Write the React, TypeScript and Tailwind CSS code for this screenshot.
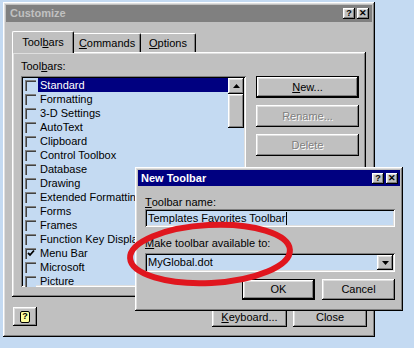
import React from "react";

const raised =
  "shadow-[inset_-1px_-1px_#000,inset_1px_1px_#fff,inset_-2px_-2px_#808080,inset_2px_2px_#dfdfdf]";
const sunken =
  "shadow-[inset_1px_1px_#808080,inset_-1px_-1px_#fff,inset_2px_2px_#000,inset_-2px_-2px_#dfdfdf]";

function Btn({
  children,
  w,
  def,
  disabled,
}: {
  children: React.ReactNode;
  w: string;
  def?: boolean;
  disabled?: boolean;
}) {
  const inner = (
    <div
      className={`${raised} bg-[#c0c0c0] h-full w-full flex items-center justify-center text-[11px] ${
        disabled ? "text-[#808080] [text-shadow:1px_1px_0_#fff]" : "text-black"
      }`}
    >
      {children}
    </div>
  );
  if (def) {
    return <div className={`${w} border border-black`}>{inner}</div>;
  }
  return <div className={w}>{inner}</div>;
}

function TitleBtn({ children }: { children: React.ReactNode }) {
  return (
    <div
      className={`${raised} bg-[#c0c0c0] w-[12px] h-[11px] flex items-center justify-center text-[9px] font-bold leading-none text-black`}
    >
      {children}
    </div>
  );
}

function Check({ checked }: { checked?: boolean }) {
  return (
    <div className="w-[11px] h-[11px] shrink-0 shadow-[inset_1px_1px_#808080,inset_2px_2px_#404040] bg-[#c4daf2] flex items-center justify-center">
      {checked && (
        <svg width="9" height="9" viewBox="0 0 9 9" className="ml-[1px] mt-[1px]">
          <path d="M1 4 L3 6 L7 1.5" stroke="#000" strokeWidth="1.8" fill="none" />
        </svg>
      )}
    </div>
  );
}

const items = [
  "Standard",
  "Formatting",
  "3-D Settings",
  "AutoText",
  "Clipboard",
  "Control Toolbox",
  "Database",
  "Drawing",
  "Extended Formatting",
  "Forms",
  "Frames",
  "Function Key Display",
  "Menu Bar",
  "Microsoft",
  "Picture",
];

export default function App() {
  return (
    <div className="w-[414px] h-[348px] bg-[#c4daf2] relative overflow-hidden pt-[2px] pl-[3px] [font-family:'Liberation_Sans',Arial,sans-serif]">
      {/* Customize window */}
      <div className={`w-[372px] h-[335px] bg-[#c0c0c0] ${raised} p-[3px] flex flex-col`}>
        <div className="h-[17px] bg-[#808080] flex items-center justify-between pl-[4px] pr-[3px]">
          <span className="text-[11px] font-bold text-[#c0c0c0]">Customize</span>
          <div className="flex gap-[2px]">
            <TitleBtn>?</TitleBtn>
            <TitleBtn>✕</TitleBtn>
          </div>
        </div>

        {/* Tabs */}
        <div className="ml-[6px] mt-[9px] flex items-end h-[21px] relative z-10">
          <div className="w-[62px] h-[22px] -mb-[1px] bg-[#c0c0c0] border-t border-l border-white rounded-tl-[2px] rounded-tr-[2px] shadow-[inset_-1px_0_#808080] border-r border-r-black flex items-center justify-center text-[11px]">
            Tool<span className="underline">b</span>ars
          </div>
          <div className="w-[67px] h-[19px] border-t border-white rounded-tr-[2px] shadow-[inset_-1px_0_#808080] border-r border-r-black flex items-center justify-center text-[11px]">
            <span className="underline">C</span>ommands
          </div>
          <div className="w-[55px] h-[19px] border-t border-white rounded-tr-[2px] shadow-[inset_-1px_0_#808080] border-r border-r-black flex items-center justify-center text-[11px]">
            <span className="underline">O</span>ptions
          </div>
        </div>

        {/* Panel */}
        <div className={`ml-[6px] w-[354px] h-[245px] ${raised} flex pl-[9px] pt-[8px]`}>
          <div className="flex flex-col">
            <div className="h-[16px] text-[11px] leading-[12px]">
              Tool<span className="underline">b</span>ars:
            </div>
            <div className={`w-[225px] h-[211px] ${sunken} bg-[#c4daf2] p-[2px] flex`}>
              <div className="flex-1 flex flex-col">
                {items.map((t, i) => (
                  <div key={t} className="h-[14px] flex items-center">
                    <div className="w-[2px]" />
                    <Check checked={t === "Menu Bar"} />
                    <div
                      className={`ml-[2px] flex-1 h-[14px] pl-[2px] flex items-center text-[11px] whitespace-nowrap overflow-hidden ${
                        i === 0 ? "bg-[#000080] text-white" : "text-black"
                      }`}
                    >
                      {t}
                    </div>
                  </div>
                ))}
              </div>
              <div className="w-[16px] flex flex-col">
                <div className={`h-[16px] ${raised} bg-[#c0c0c0] flex items-center justify-center`}>
                  <svg width="7" height="4" viewBox="0 0 7 4">
                    <path d="M3.5 0 L7 4 L0 4 Z" fill="#000" />
                  </svg>
                </div>
                <div className={`h-[34px] ${raised} bg-[#c0c0c0]`} />
                <div className="flex-1 bg-[#c4daf2]" />
              </div>
            </div>
          </div>
          <div className="ml-[10px] mt-[16px] flex flex-col gap-[7px]">
            <Btn w="w-[103px] h-[22px]" def>
              <span className="underline">N</span>ew...
            </Btn>
            <Btn w="w-[103px] h-[22px]" disabled>
              Rename...
            </Btn>
            <Btn w="w-[103px] h-[22px]" disabled>
              Delete
            </Btn>
          </div>
        </div>

        {/* Bottom row */}
        <div className="ml-[7px] mt-[10px] flex items-start">
          <div className={`w-[24px] h-[19px] ${raised} bg-[#c0c0c0] flex items-center justify-center`}>
            <div className="w-[10px] h-[12px] bg-[#ffffa0] border border-black rounded-[2px] flex items-center justify-center text-[9px] font-bold leading-none text-black">
              ?
            </div>
          </div>
          <div className="ml-[175px] mt-[1px] flex gap-[6px]">
            <Btn w="w-[75px] h-[19px]">
              <span className="underline">K</span>eyboard...
            </Btn>
            <Btn w="w-[74px] h-[19px]">Close</Btn>
          </div>
        </div>
      </div>

      {/* New Toolbar dialog */}
      <div className={`absolute left-[135px] top-[167px] w-[268px] h-[144px] bg-[#c0c0c0] ${raised} p-[3px] flex flex-col z-20`}>
        <div className="h-[16px] bg-[#000080] flex items-center justify-between pl-[3px] pr-[2px]">
          <span className="text-[11px] font-bold text-white">New Toolbar</span>
          <div className="flex gap-[2px]">
            <TitleBtn>?</TitleBtn>
            <TitleBtn>✕</TitleBtn>
          </div>
        </div>
        <div className="pl-[7px] flex flex-col">
          <div className="mt-[9px] h-[14px] flex items-center text-[11px]">
            <span className="underline">T</span>oolbar name:
          </div>
          <div className={`w-[250px] h-[18px] ${sunken} bg-[#c4daf2] flex items-center pl-[3px] text-[11px]`}>
            Templates Favorites Toolbar
            <span className="inline-block w-[1px] h-[13px] bg-black ml-[1px]" />
          </div>
          <div className="mt-[9px] h-[14px] flex items-center text-[11px]">
            <span className="underline">M</span>ake toolbar available to:
          </div>
          <div className={`mt-[3px] w-[250px] h-[19px] ${sunken} bg-[#c4daf2] flex items-center p-[2px] text-[11px]`}>
            <div className="flex-1 pl-[1px]">MyGlobal.dot</div>
            <div className={`w-[16px] h-[15px] ${raised} bg-[#c0c0c0] flex items-center justify-center`}>
              <svg width="7" height="4" viewBox="0 0 7 4">
                <path d="M0 0 L7 0 L3.5 4 Z" fill="#000" />
              </svg>
            </div>
          </div>
          <div className="mt-[7px] w-[250px] flex justify-end gap-[7px]">
            <Btn w="w-[73px] h-[21px]" def>
              OK
            </Btn>
            <Btn w="w-[73px] h-[21px]">Cancel</Btn>
          </div>
        </div>
      </div>

      {/* Red annotation ellipse */}
      <svg className="absolute left-[120px] top-[212px] z-30" width="184" height="84" viewBox="0 0 184 84">
        <ellipse cx="90" cy="42" rx="80" ry="29" fill="none" stroke="#e0161e" strokeWidth="6" transform="rotate(-3 90 42)" />
      </svg>
    </div>
  );
}
